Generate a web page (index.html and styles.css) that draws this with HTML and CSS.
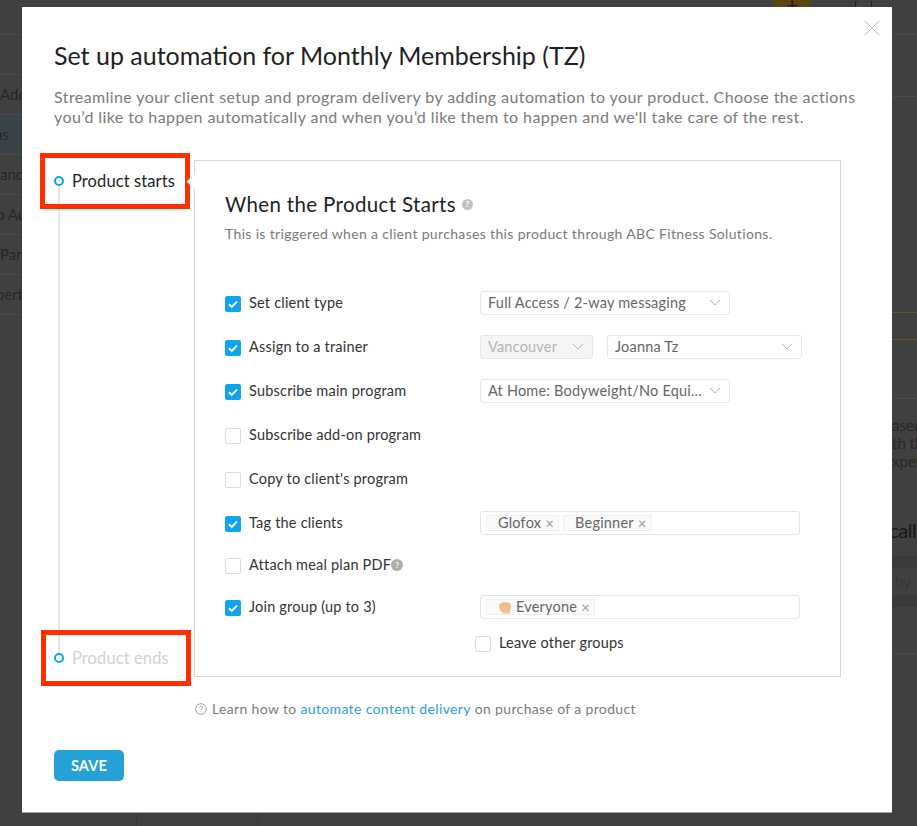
FILE: index.html
```html
<!DOCTYPE html>
<html lang="en">
<head>
<meta charset="utf-8">
<title>Set up automation</title>
<link rel="stylesheet" href="styles.css">
</head>
<body>
<div class="backdrop">
  <div class="bg-top">
    <span class="bg-add">+</span>
    <span class="bg-avatar"></span>
  </div>
  <div class="bg-main">
    <nav class="bg-nav">
      <div class="bg-nav-item"><span>Add</span></div>
      <div class="bg-nav-item active"><span>us</span></div>
      <div class="bg-nav-item"><span>and</span></div>
      <div class="bg-nav-item cut"><span>o Au</span></div>
      <div class="bg-nav-item"><span>Part</span></div>
      <div class="bg-nav-item cut"><span>pert</span></div>
    </nav>
    <div class="bg-right">
      <div class="bg-r1"></div>
      <div class="bg-gold"></div>
      <div class="bg-r2">
        <p>ased</p><p>th th</p><p>xper</p>
      </div>
      <div class="bg-heading">cally</div>
      <div class="bg-band"></div>
      <div class="bg-by">by</div>
      <div class="bg-band short"></div>
      <div class="bg-end"></div>
    </div>
  </div>
  <div class="bg-foot"><div class="bg-foot-cell"></div></div>
</div>

<main class="modal">
  <button class="close" aria-label="Close">
    <svg viewBox="0 0 16 16" width="16" height="16"><path d="M1 1l14 14M15 1L1 15" stroke="#bdbdbd" stroke-width="1" fill="none"/></svg>
  </button>
  <h1 class="title">Set up automation for Monthly Membership (TZ)</h1>
  <p class="desc">Streamline your client setup and program delivery by adding automation to your product. Choose the actions you’d like to happen automatically and when you’d like them to happen and we'll take care of the rest.</p>

  <div class="body">
    <aside class="steps">
      <div class="step current"><i class="dot"></i>Product starts<span class="mark"></span></div>
      <div class="step"><i class="dot"></i>Product ends<span class="mark second"></span></div>
    </aside>

    <section class="panel">
      <h2 class="panel-title">When the Product Starts <span class="help large">?</span></h2>
      <p class="panel-sub">This is triggered when a client purchases this product through ABC Fitness Solutions.</p>

      <div class="rows">
        <div class="row">
          <label class="check"><span class="box on"><svg viewBox="0 0 16 16"><path d="M4 8.300l2.800 2.600L12 5.600" /></svg></span>Set client type</label>
          <div class="controls"><div class="select w250"><span>Full Access / 2-way messaging</span><svg class="chev" viewBox="0 0 12 7"><path d="M1 1l5 5 5-5"/></svg></div></div>
        </div>
        <div class="row">
          <label class="check"><span class="box on"><svg viewBox="0 0 16 16"><path d="M4 8.300l2.800 2.600L12 5.600" /></svg></span>Assign to a trainer</label>
          <div class="controls">
            <div class="select disabled w113"><span>Vancouver</span><svg class="chev" viewBox="0 0 12 7"><path d="M1 1l5 5 5-5"/></svg></div>
            <div class="select w195"><span>Joanna Tz</span><svg class="chev" viewBox="0 0 12 7"><path d="M1 1l5 5 5-5"/></svg></div>
          </div>
        </div>
        <div class="row">
          <label class="check"><span class="box on"><svg viewBox="0 0 16 16"><path d="M4 8.300l2.800 2.600L12 5.600" /></svg></span>Subscribe main program</label>
          <div class="controls"><div class="select w250"><span>At Home: Bodyweight/No Equi...</span><svg class="chev" viewBox="0 0 12 7"><path d="M1 1l5 5 5-5"/></svg></div></div>
        </div>
        <div class="row">
          <label class="check"><span class="box"></span>Subscribe add-on program</label>
        </div>
        <div class="row">
          <label class="check"><span class="box"></span>Copy to client's program</label>
        </div>
        <div class="row">
          <label class="check"><span class="box on"><svg viewBox="0 0 16 16"><path d="M4 8.300l2.800 2.600L12 5.600" /></svg></span>Tag the clients</label>
          <div class="controls"><div class="tags">
            <span class="tag">Glofox <b class="x">×</b></span>
            <span class="tag">Beginner <b class="x">×</b></span>
          </div></div>
        </div>
        <div class="row short">
          <label class="check"><span class="box"></span>Attach meal plan PDF<span class="help small">?</span></label>
        </div>
        <div class="row">
          <label class="check"><span class="box on"><svg viewBox="0 0 16 16"><path d="M4 8.300l2.800 2.600L12 5.600" /></svg></span>Join group (up to 3)</label>
          <div class="controls"><div class="tags">
            <span class="tag emoji"><svg class="fist" viewBox="0 0 14 13"><path d="M1 5.500C1 3 2.600 2 4 1.800 5 .8 6.300 .8 7.200 1.300 8.300 .7 9.500 .8 10.300 1.500c1.700.2 2.900 1.700 2.900 4 0 1.500-.5 2.600-1.200 3.200v2.200c0 1-1 1.600-2.500 1.600H6.300c-1.300 0-2-.5-2.300-1.400C2.100 9.900 1 8 1 5.500z" fill="#f2c08c"/><path d="M4.500 3v2M7.300 2.500v2.300M10 3v2" stroke="#e2a56c" stroke-width=".7" fill="none"/></svg> Everyone <b class="x">×</b></span>
          </div></div>
        </div>
        <div class="row leave">
          <label class="check"><span class="box"></span>Leave other groups</label>
        </div>
      </div>
    </section>
  </div>

  <p class="learn"><svg class="learn-icon" viewBox="0 0 12 12"><circle cx="6" cy="6" r="5.300"/><path d="M4.500 4.700c0-1 .7-1.500 1.500-1.500s1.500.5 1.500 1.300c0 1.100-1.500 1.200-1.500 2.400M6 8.300v.9"/></svg> Learn how to <a href="#">automate content delivery</a> on purchase of a product</p>

  <button class="save">SAVE</button>
</main>
</body>
</html>
```
FILE: styles.css
```css
* { box-sizing: border-box; }
html, body { margin: 0; height: 100%; }
body {
  width: 917px;
  height: 826px;
  overflow: hidden;
  position: relative;
  background: #404040;
  font-family: Lato, "Liberation Sans", sans-serif;
  color: #2b2b2b;
}

/* dimmed page behind the modal */
.backdrop { height: 826px; display: flex; flex-direction: column; color: #1f1f1f; }
.bg-top { height: 35px; flex: none; border-bottom: 1px solid #4a4a4a; display: flex; justify-content: flex-end; padding-right: 45px; }
.bg-add { width: 38px; height: 7px; margin-right: 44px; background: #5a4310; color: #1d1d1d; line-height: 8px; text-align: center; font-size: 20px; overflow: hidden; }
.bg-avatar { width: 17px; height: 7px; border: 1px solid #1f1f1f; border-top: 0; border-bottom: 0; border-radius: 3px 3px 0 0; }
.bg-main { flex: 1; display: flex; justify-content: space-between; min-height: 0; }
.bg-nav { width: 22px; overflow: hidden; padding-top: 39px; }
.bg-nav-item { height: 40px; width: 22px; overflow: hidden; border-top: 1px solid #4a4a4a; white-space: nowrap; font-size: 15px; line-height: 39px; color: #262626; }
.bg-nav-item:last-child { border-bottom: 1px solid #4a4a4a; height: 41px; }
.bg-nav-item.active { background: #3a4448; text-indent: -6px; }
.bg-nav-item.cut { text-indent: -4px; }
.bg-right { width: 25px; overflow: hidden; font-size: 15px; color: #262626; }
.bg-r1 { margin-top: 61px; border-top: 1px solid #4a4a4a; height: 216px; }
.bg-gold { height: 28px; border-top: 1px solid #6b5518; border-bottom: 1px solid #6b5518; }
.bg-r2 { margin-top: 58px; border-top: 1px solid #4a4a4a; padding-top: 17px; height: 117px; white-space: nowrap; }
.bg-r2 p { margin: 0; line-height: 18px; }
.bg-heading { font-size: 20px; line-height: 30px; color: #161616; white-space: nowrap; text-indent: -3px; letter-spacing: -.4px; }
.bg-band { height: 12px; margin-top: 11px; background: #3a3a3a; }
.bg-by { height: 27px; line-height: 27px; padding-left: 3px; color: #363636; }
.bg-band.short { margin-top: 0; }
.bg-end { margin-top: 46px; border-top: 1px solid #4a4a4a; }
.bg-foot { height: 14px; flex: none; padding-left: 136px; }
.bg-foot-cell { width: 122px; height: 14px; border-left: 1px solid #383838; border-right: 1px solid #383838; }

/* modal */
.modal {
  position: absolute;
  left: 22px;
  top: 7px;
  width: 870px;
  height: 806px;
  background: #fff;
  border-bottom: 1px solid #a8a8a8;
  padding: 33px 32px 0;
}
.close { position: absolute; right: 12px; top: 13px; width: 16px; height: 16px; padding: 0; border: 0; background: none; }
.close svg { display: block; }
.title { margin: 0; font-size: 25px; line-height: 30px; font-weight: 400; letter-spacing: 0; color: #1f1f1f; }
.desc { margin: 17px 0 0; width: 806px; font-size: 16px; line-height: 20px; letter-spacing: .41px; color: #7b7b7b; }

.body { display: flex; margin-top: 33px; height: 517px; }
.steps { width: 140px; flex: none; position: relative; display: flex; flex-direction: column; justify-content: space-between; padding: 10px 0 9px; }
.steps::before { content: ""; position: absolute; left: 4px; top: 20px; bottom: 20px; width: 2px; background: #e6e6e6; }
.step { position: relative; display: flex; align-items: center; gap: 8px; height: 21px; font-size: 16.500px; color: #d2d2d2; white-space: nowrap; letter-spacing: .1px; }
.step.current { color: #1f1f1f; }
.dot { width: 10px; height: 10px; flex: none; border-radius: 50%; border: 2.500px solid #0ea5ec; background: #fff; position: relative; }
.mark { position: absolute; left: -14px; top: -17.500px; width: 150px; height: 56px; border: 5px solid #ff3000; }
.mark.second { left: -13px; top: -17px; }

.panel { flex: 1; max-width: 647px; border: 1px solid #d6d6d6; padding: 29px 30px 0; position: relative; }
.panel::before { content: ""; position: absolute; left: -6px; top: 15px; width: 10px; height: 10px; background: #fff; border-left: 1px solid #eeeeee; border-bottom: 1px solid #eeeeee; transform: rotate(45deg); }
.panel-title { margin: 0; font-size: 20.500px; line-height: 28px; font-weight: 400; letter-spacing: .35px; color: #1f1f1f; display: flex; align-items: center; gap: 6px; }
.panel-sub { margin: 6px 0 0; font-size: 14px; line-height: 20px; letter-spacing: .34px; color: #7b7b7b; }

.rows { margin-top: 36.500px; }
.row { height: 44px; display: flex; align-items: center; }
.row.short { height: 40px; }
.row.leave { height: 28px; padding-left: 250px; }
.check { width: 255px; flex: none; display: flex; align-items: center; gap: 8px; font-size: 14.500px; letter-spacing: .2px; color: #333; white-space: nowrap; }
.box { width: 16px; height: 16px; flex: none; border-radius: 2px; border: 1px solid #dcdcdc; background: #fff; display: block; position: relative; top: 1px; }
.box.on { background: #0ea5ec; border-color: #0ea5ec; }
.box svg { display: block; width: 16px; height: 16px; margin: -1px; }
.box path { fill: none; stroke: #fff; stroke-width: 2; }
.controls { display: flex; gap: 14px; }
.select { height: 24px; display: flex; align-items: center; justify-content: space-between; padding: 0 8px 0 7px; border: 1px solid #e6e6e6; border-radius: 3px; font-size: 14.500px; letter-spacing: .2px; color: #666; white-space: nowrap; background: #fff; }
.select.disabled { background: #f5f5f5; color: #b4b4b4; }
.w250 { width: 250px; }
.w113 { width: 113px; }
.w195 { width: 195px; }
.chev { width: 12px; height: 7px; fill: none; stroke: #b5b5b5; stroke-width: 1; }
.tags { width: 320px; height: 24px; display: flex; align-items: center; gap: 4px; padding: 0 5px; border: 1px solid #e6e6e6; border-radius: 3px; }
.tag { height: 16px; display: flex; align-items: center; gap: 4px; padding: 0 4px 0 11px; border: 1px solid #efefef; background: #fafafa; font-size: 14.500px; letter-spacing: .2px; color: #666; white-space: nowrap; }
.fist { width: 14px; height: 13px; margin-top: 2px; }
.x { font-weight: 400; font-size: 15px; color: #9a9a9a; }

.help { display: inline-flex; align-items: center; justify-content: center; border-radius: 50%; background: #c2c2c8; color: #fff; font-weight: 700; }
.help.large { width: 11px; height: 11px; font-size: 8px; letter-spacing: 0; }
.help.small { width: 12px; height: 12px; font-size: 8px; margin-left: -8px; letter-spacing: 0; background: #adadad; }

.learn { margin: 22px 0 0 141px; font-size: 14px; line-height: 20px; letter-spacing: .35px; color: #7b7b7b; display: flex; align-items: center; white-space: pre; }
.learn a { color: #2a9fd8; text-decoration: none; }
.learn-icon { width: 12px; height: 12px; margin-right: 1px; fill: none; stroke: #8a8a8a; stroke-width: .8; }

.save { display: block; margin-top: 31px; width: 70px; height: 31px; border: 0; border-radius: 5px; background: #26a1d8; color: #fff; font: 700 14.500px Lato, "Liberation Sans", sans-serif; letter-spacing: .2px; }
```
